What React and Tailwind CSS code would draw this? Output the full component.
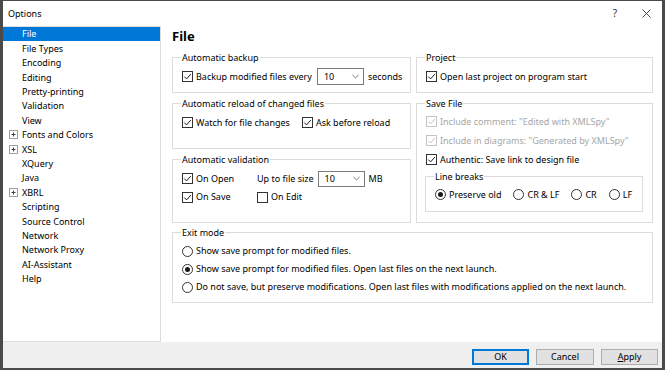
import React from "react";

const treeItems = [
  { label: "File", selected: true },
  { label: "File Types" },
  { label: "Encoding" },
  { label: "Editing" },
  { label: "Pretty-printing" },
  { label: "Validation" },
  { label: "View" },
  { label: "Fonts and Colors", expand: true },
  { label: "XSL", expand: true },
  { label: "XQuery" },
  { label: "Java" },
  { label: "XBRL", expand: true },
  { label: "Scripting" },
  { label: "Source Control" },
  { label: "Network" },
  { label: "Network Proxy" },
  { label: "AI-Assistant" },
  { label: "Help" },
];

const Check = ({ checked = true, disabled = false }) => (
  <span
    className={`inline-flex w-[11px] h-[11px] shrink-0 items-center justify-center border bg-white ${
      disabled ? "border-[#c4c4c4]" : "border-[#333333]"
    }`}
  >
    {checked && (
      <svg viewBox="0 0 10 10" className="w-[9px] h-[9px]">
        <path
          d="M1.4 5.1 L4 7.7 L8.7 2.3"
          fill="none"
          stroke={disabled ? "#c0c0c0" : "#1a1a1a"}
          strokeWidth="1.1"
        />
      </svg>
    )}
  </span>
);

const Radio = ({ checked = false }) => (
  <span className="inline-flex w-[11px] h-[11px] shrink-0 items-center justify-center rounded-full border border-[#333333] bg-white">
    {checked && <span className="w-[5px] h-[5px] rounded-full bg-[#1a1a1a]" />}
  </span>
);

const Option = ({ checked, disabled, children, className = "h-[15px]" }) => (
  <label className={`flex items-center gap-[3px] shrink-0 ${className} ${disabled ? "text-[#a6a6a6]" : ""}`}>
    <Check checked={checked} disabled={disabled} />
    <span>{children}</span>
  </label>
);

const RadioOption = ({ checked, children, className = "h-[15px]" }) => (
  <label className={`flex items-center gap-[3px] shrink-0 ${className}`}>
    <Radio checked={checked} />
    <span>{children}</span>
  </label>
);

const Combo = ({ value, className = "h-[17px]" }) => (
  <div className={`flex shrink-0 items-center justify-between w-[47px] ${className} border border-[#7a7a7a] bg-white pl-[6px] pr-[4px]`}>
    <span>{value}</span>
    <svg viewBox="0 0 8 5" className="w-[7px] h-[5px]">
      <path d="M0.5 0.8 L4 4 L7.5 0.8" fill="none" stroke="#555" strokeWidth="0.9" />
    </svg>
  </div>
);

const Group = ({ title, className = "", children }) => (
  <fieldset className={`border border-[#dcdcdc] px-[9px] min-w-0 ${className}`}>
    <legend className="px-[1px] -ml-[1px] leading-[13px]">{title}</legend>
    {children}
  </fieldset>
);

const PlusBox = () => (
  <svg viewBox="0 0 9 9" className="w-[9px] h-[9px]">
    <rect x="0.5" y="0.5" width="8" height="8" fill="#fff" stroke="#a0a0a0" />
    <path d="M2.5 4.5 H6.5 M4.5 2.5 V6.5" stroke="#404040" strokeWidth="1" />
  </svg>
);

const App = () => {
  return (
    <div className="w-[665px] h-[370px] flex flex-col bg-white border-t border-l-[3px] border-r-[3px] border-b-2 border-[#4a4a4a] text-[9px] text-black whitespace-nowrap font-['Noto_Sans',sans-serif] overflow-hidden">
      {/* Title bar */}
      <div className="h-[25px] flex items-center shrink-0">
        <span className="pl-[5px] text-[9px]">Options</span>
        <span className="ml-auto mr-[25px] text-[10px] text-[#333]">?</span>
        <svg viewBox="0 0 10 10" className="w-[9px] h-[9px] mr-[11px]">
          <path d="M0.5 0.5 L9.5 9.5 M9.5 0.5 L0.5 9.5" stroke="#222" strokeWidth="0.9" />
        </svg>
      </div>

      {/* Body */}
      <div className="flex flex-1 min-h-0">
        {/* Tree */}
        <div className="w-[158px] shrink-0 border-t border-r border-b border-[#dedede] flex flex-col">
          {treeItems.map((item) => (
            <div
              key={item.label}
              className={`flex items-center h-[14.4px] pl-[6px] ${
                item.selected ? "bg-[#0078d7] text-white" : ""
              }`}
            >
              <span className="w-[13px] flex items-center">{item.expand && <PlusBox />}</span>
              <span>{item.label}</span>
            </div>
          ))}
        </div>

        {/* Main */}
        <div className="flex-1 pl-[11px] pr-[9px] flex flex-col">
          <div className="h-[25px] pt-[1px] text-[13px] font-bold leading-[18px]">File</div>

          <div className="grid grid-cols-[239px_237px] gap-x-[5px]">
            <div className="flex flex-col gap-[4px]">
              <Group title="Automatic backup" className="h-[42px] pt-[3px]">
                <div className="flex items-center h-[19px]">
                  <Option checked>Backup modified files every</Option>
                  <Combo value="10" className="h-[17px] ml-[5px]" />
                  <span className="ml-[4px]">seconds</span>
                </div>
              </Group>

              <Group title="Automatic reload of changed files" className="h-[52px] pt-[5px]">
                <div className="flex items-center gap-[12px]">
                  <Option checked>Watch for file changes</Option>
                  <Option checked>Ask before reload</Option>
                </div>
              </Group>

              <Group title="Automatic validation" className="h-[70px] pt-[3px]">
                <div className="grid grid-cols-[75px_1fr]">
                  <div className="flex items-center h-[19px]">
                    <Option checked>On Open</Option>
                  </div>
                  <div className="flex items-center h-[19px]">
                    <span>Up to file size</span>
                    <Combo value="10" className="h-[16px] ml-[4px]" />
                    <span className="ml-[4px]">MB</span>
                  </div>
                  <div className="flex items-center h-[16px] mt-[1px]">
                    <Option checked>On Save</Option>
                  </div>
                  <div className="flex items-center h-[16px] mt-[1px]">
                    <Option checked={false}>On Edit</Option>
                  </div>
                </div>
              </Group>
            </div>

            <div className="flex flex-col gap-[4px]">
              <Group title="Project" className="h-[42px] pt-[5px] px-[8px]">
                <Option checked>Open last project on program start</Option>
              </Group>

              <Group title="Save File" className="h-[126px] pt-[2px] px-[8px]">
                <Option checked disabled className="h-[19px]">
                  Include comment: "Edited with XMLSpy"
                </Option>
                <Option checked disabled className="h-[19px]">
                  Include in diagrams: "Generated by XMLSpy"
                </Option>
                <Option checked className="h-[19px]">
                  Authentic: Save link to design file
                </Option>
                <Group title="Line breaks" className="h-[42px] mt-[1px] -ml-[1px] pt-[4px] px-[8px]">
                  <div className="flex items-center gap-[12px]">
                    <RadioOption checked>Preserve old</RadioOption>
                    <RadioOption>CR &amp; LF</RadioOption>
                    <RadioOption>CR</RadioOption>
                    <RadioOption>LF</RadioOption>
                  </div>
                </Group>
              </Group>
            </div>
          </div>

          <Group title="Exit mode" className="h-[77px] mt-[3px] pt-[3px]">
            <RadioOption className="h-[18px]">Show save prompt for modified files.</RadioOption>
            <RadioOption checked className="h-[18px]">
              Show save prompt for modified files. Open last files on the next launch.
            </RadioOption>
            <RadioOption className="h-[18px]">
              Do not save, but preserve modifications. Open last files with modifications applied on the next launch.
            </RadioOption>
          </Group>
        </div>
      </div>

      {/* Footer */}
      <div className="h-[26px] shrink-0 bg-[#f0f0f0] flex items-center justify-end gap-[7px] pr-[4px] pt-[3px]">
        <button className="w-[57px] h-[16px] bg-[#e1e1e1] border border-[#0078d7] outline outline-1 -outline-offset-2 outline-[#0078d7] leading-none">
          OK
        </button>
        <button className="w-[58px] h-[16px] bg-[#e1e1e1] border border-[#adadad] leading-none">Cancel</button>
        <button className="w-[57px] h-[16px] bg-[#e1e1e1] border border-[#adadad] leading-none">
          <span className="underline">A</span>pply
        </button>
      </div>
    </div>
  );
};

export default App;
